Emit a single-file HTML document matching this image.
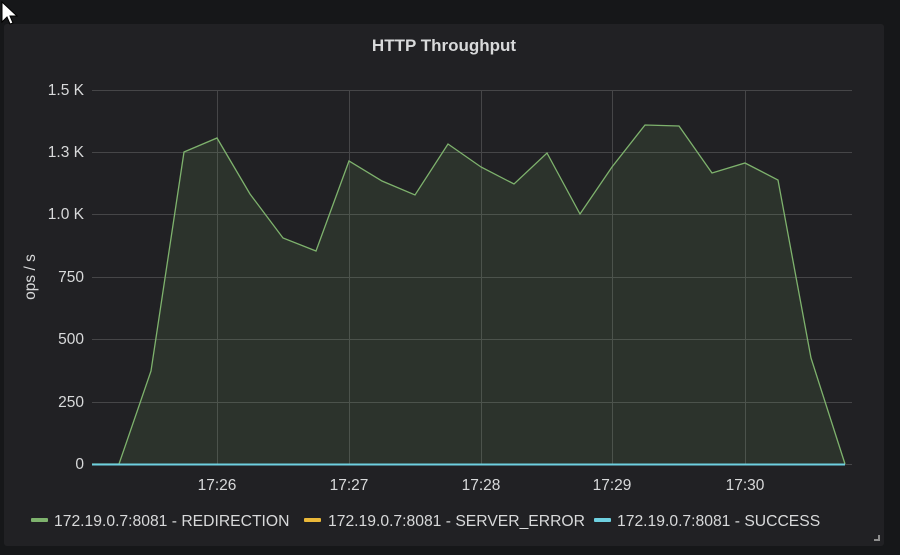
<!DOCTYPE html>
<html><head><meta charset="utf-8"><style>
body{margin:0;width:900px;height:555px;background:#161719;overflow:hidden;font-family:"Liberation Sans",sans-serif}
</style></head><body>
<svg width="900" height="555" xmlns="http://www.w3.org/2000/svg" style="position:absolute;left:0;top:0">
<rect x="4" y="24" width="880" height="522" rx="3" fill="#212124"/>
<text x="444" y="51" fill="#d8d9da" font-size="17" font-weight="bold" text-anchor="middle" font-family="Liberation Sans">HTTP Throughput</text>
<g stroke="#464648" stroke-width="1">
<line x1="92" y1="90.5" x2="852" y2="90.5"/><line x1="92" y1="152.5" x2="852" y2="152.5"/><line x1="92" y1="214.5" x2="852" y2="214.5"/><line x1="92" y1="277.5" x2="852" y2="277.5"/><line x1="92" y1="339.5" x2="852" y2="339.5"/><line x1="92" y1="402.5" x2="852" y2="402.5"/><line x1="92" y1="464.5" x2="852" y2="464.5"/>
<line x1="217.5" y1="90" x2="217.5" y2="464"/><line x1="349.5" y1="90" x2="349.5" y2="464"/><line x1="481.5" y1="90" x2="481.5" y2="464"/><line x1="612.5" y1="90" x2="612.5" y2="464"/><line x1="745.5" y1="90" x2="745.5" y2="464"/>
</g>
<polygon fill="rgba(126,178,109,0.12)" points="119,464 151,371 184,152 217,138 250,194 283,238 316,251 349,161 382,181 415,195 448,144 481,167 514,184 547,153 580,214 612,167 645,125 679,126 712,173 745,163 778,180 811,358 845,464"/>
<polyline fill="none" stroke="#7eb26d" stroke-width="1.3" points="92,464 119,464 151,371 184,152 217,138 250,194 283,238 316,251 349,161 382,181 415,195 448,144 481,167 514,184 547,153 580,214 612,167 645,125 679,126 712,173 745,163 778,180 811,358 845,464"/>
<line x1="92" y1="464.5" x2="845" y2="464.5" stroke="#6ed0e0" stroke-width="2"/>
<g fill="#d8d9da" font-size="15.5" text-anchor="end" font-family="Liberation Sans">
<text x="84" y="95">1.5 K</text><text x="84" y="157">1.3 K</text><text x="84" y="219">1.0 K</text><text x="84" y="282">750</text><text x="84" y="344">500</text><text x="84" y="407">250</text><text x="84" y="469">0</text>
</g>
<g fill="#d8d9da" font-size="15.5" text-anchor="middle" font-family="Liberation Sans">
<text x="217" y="490">17:26</text><text x="349" y="490">17:27</text><text x="481" y="490">17:28</text><text x="612" y="490">17:29</text><text x="745" y="490">17:30</text>
</g>
<text transform="translate(35,277) rotate(-90)" fill="#d8d9da" font-size="15.5" text-anchor="middle" font-family="Liberation Sans">ops / s</text>
<rect x="31" y="518" width="17" height="4" rx="1" fill="#7eb26d"/>
<rect x="304" y="518" width="17" height="4" rx="1" fill="#eab839"/>
<rect x="594" y="518" width="17" height="4" rx="1" fill="#6ed0e0"/>
<g fill="#d8d9da" font-size="15.7" font-family="Liberation Sans">
<text x="54" y="526">172.19.0.7:8081 - REDIRECTION</text>
<text x="328" y="526">172.19.0.7:8081 - SERVER_ERROR</text>
<text x="617" y="526">172.19.0.7:8081 - SUCCESS</text>
</g>
<path d="M874 541h6v-6h-2v4h-4z" fill="#8e8e8e"/>
<path d="M2 2v20l5-5 3 7 3-1-3-7h7z" fill="#fff" stroke="#000" stroke-width="1"/>
</svg>
</body></html>
